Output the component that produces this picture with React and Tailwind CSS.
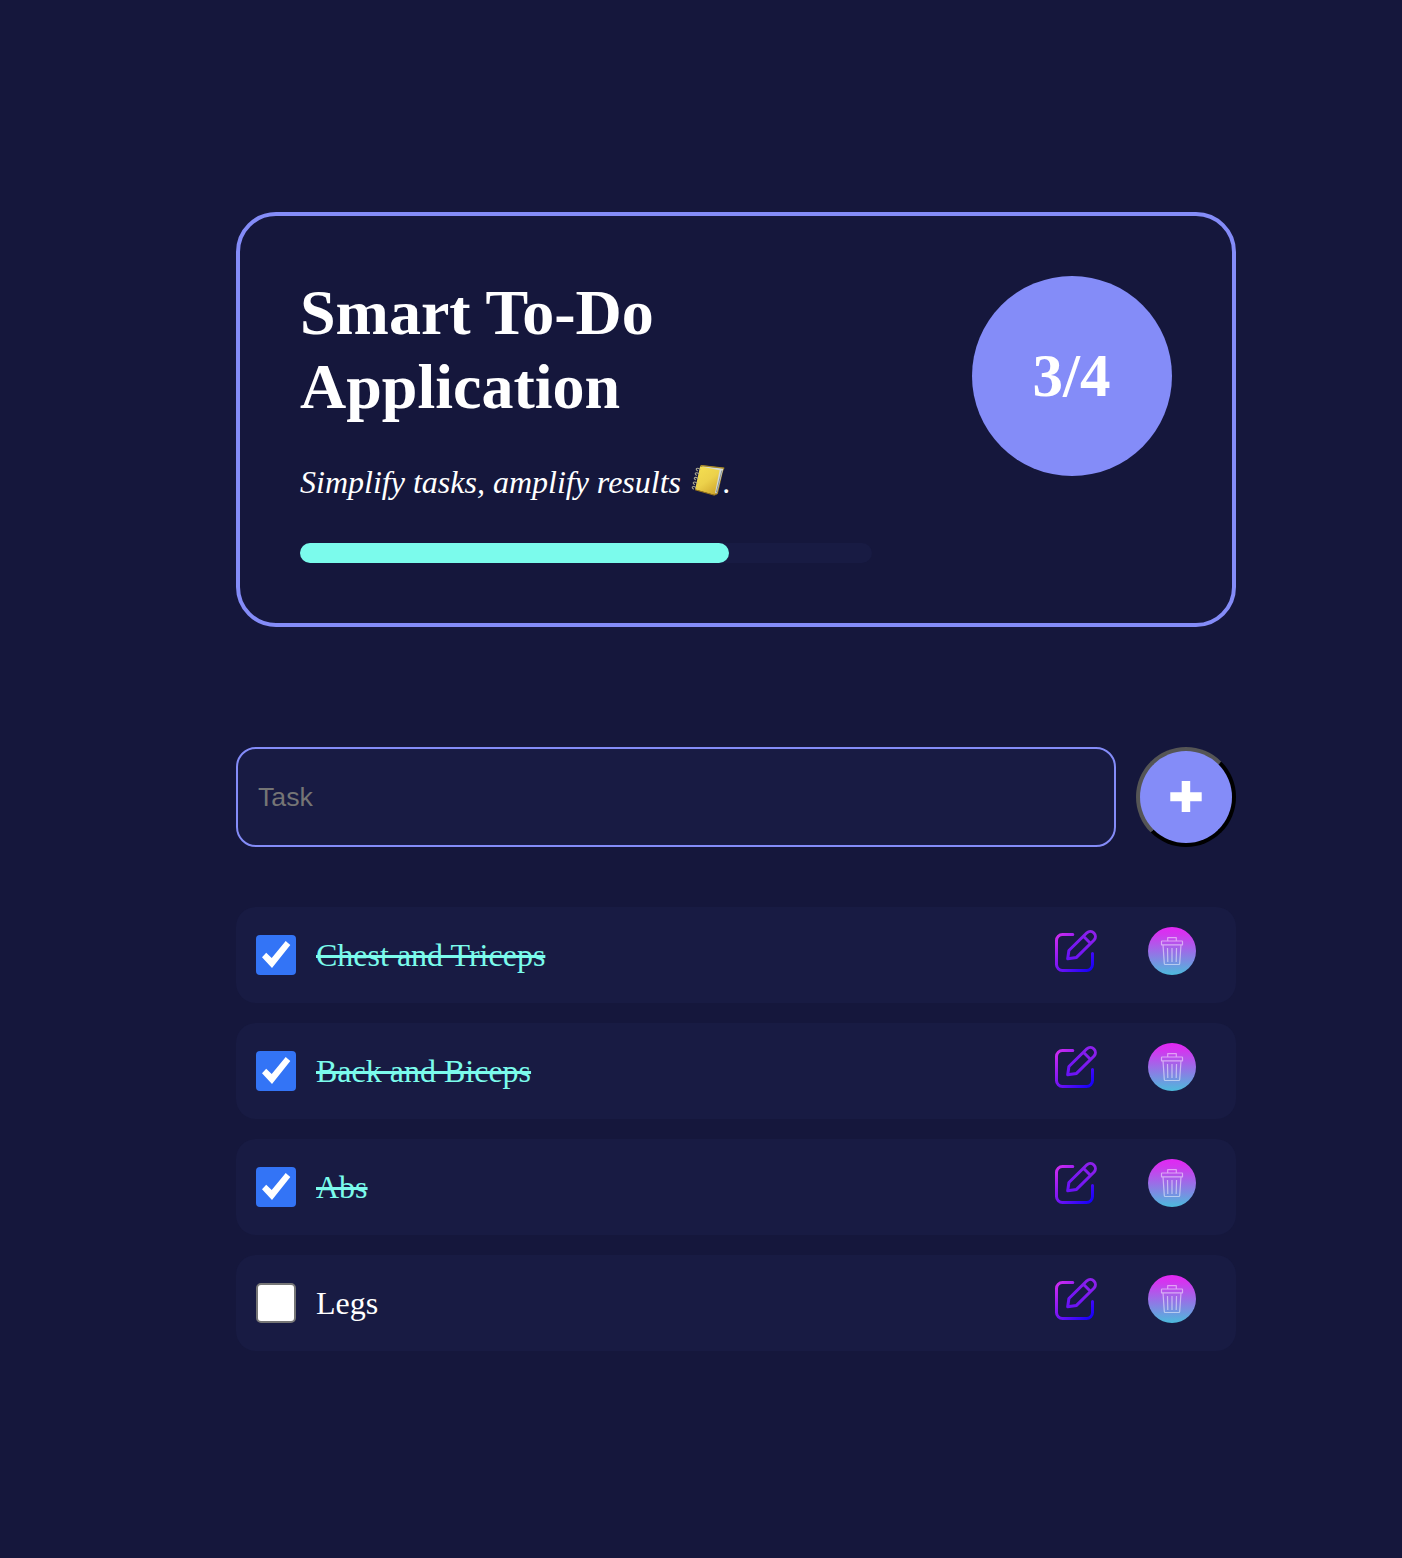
import React from "react";

const tasks = [
  { title: "Chest and Triceps", done: true },
  { title: "Back and Biceps", done: true },
  { title: "Abs", done: true },
  { title: "Legs", done: false },
];

function NotebookIcon() {
  return (
    <svg className="-mt-[10px] mr-[-4px] ml-px inline-block h-[37px] w-[37px] align-middle" viewBox="-1.300 -1 37 37" fill="none">
      <defs>
        <linearGradient id="cover" x1="0.2" y1="0" x2="0.8" y2="1">
          <stop offset="0" stopColor="#f4de50" />
          <stop offset="0.5" stopColor="#ecd14b" />
          <stop offset="1" stopColor="#cfa62c" />
        </linearGradient>
      </defs>
      <path d="M9.500 2 33 5 31.500 9 26.500 31 23 32Z" fill="#a8872a" />
      <path d="M11 3.200 32 5.800 25.500 30.500 23 30Z" fill="#d5dad6" />
      <path d="M30.500 7.500 25 29.500" stroke="#87949b" strokeWidth="1" />
      <path d="M8.800 3.300 28.300 7.300 23.300 32 3.800 26.500Z" fill="url(#cover)" />
      <path d="M9.300 2.500 33 5" stroke="#a98b27" strokeWidth="1" />
      <path d="M3.800 26.800 23 32.200 25.500 31" stroke="#9c7719" strokeWidth="1" />
      <g stroke="#a9a68f" strokeWidth="1.100">
        <path d="M9 6.500C5 3.800 3.600 6.500 6.500 8" />
        <path d="M8 11C4 8.300 2.600 11 5.500 12.500" />
        <path d="M7 15.600C3 12.900 1.600 15.600 4.500 17.100" />
        <path d="M6 20.200C2 17.500 .6 20.200 3.500 21.700" />
        <path d="M5 24.700C1 22 -.4 24.700 2.500 26.200" />
      </g>
    </svg>
  );
}

function EditIcon() {
  return (
    <svg className="block h-12 w-12" viewBox="4 3 48 48" fill="none" strokeWidth="3" strokeLinecap="round" strokeLinejoin="round">
      <defs>
        <linearGradient id="edit" gradientUnits="userSpaceOnUse" x1="8" y1="10" x2="45" y2="46">
          <stop offset="0" stopColor="#d22df0" />
          <stop offset="0.4" stopColor="#8718f3" />
          <stop offset="1" stopColor="#1100fa" />
        </linearGradient>
        <linearGradient id="pencil" gradientUnits="userSpaceOnUse" x1="42" y1="6" x2="22" y2="35">
          <stop offset="0" stopColor="#8e20ec" />
          <stop offset="1" stopColor="#6a12f7" />
        </linearGradient>
      </defs>
      <path d="M24.800 10.500H14.500a6 6 0 0 0-6 6V40.500a6 6 0 0 0 6 6H38.500a6 6 0 0 0 6-6V29.500" stroke="url(#edit)" />
      <path d="M19.700 34.700 20.900 26.500 38.900 8.800a5.100 5.100 0 0 1 7.200 7.200L28.500 33.400ZM35.400 12.300l7.200 7.200" stroke="url(#pencil)" />
    </svg>
  );
}

function TrashIcon() {
  return (
    <svg className="block h-12 w-12" viewBox="4 5 48 48" fill="none">
      <defs>
        <linearGradient id="trash" x1="0" y1="0" x2="0" y2="1">
          <stop offset="0" stopColor="#e327f4" />
          <stop offset="0.15" stopColor="#d336ef" />
          <stop offset="1" stopColor="#4cbbdc" />
        </linearGradient>
      </defs>
      <circle cx="28" cy="29" r="24" fill="url(#trash)" />
      <g stroke="#fff" strokeOpacity=".5" strokeWidth="1.200" strokeLinejoin="round">
        <path d="M23.700 19V15.700h8.600V19M17.500 19.500q0-.5.5-.5h20q.5 0 .5.500V22.800h-21ZM19 22.800l1.300 18.700q0 1 1 1h13.400q1 0 1-1L37 22.800" />
        <path d="M23.500 26l.3 14M28 26v14M32.500 26l-.3 14" />
      </g>
    </svg>
  );
}

function TaskRow({ title, done }) {
  return (
    <li className="flex h-24 items-center rounded-[20px] bg-[#181b43] px-5">
      <span
        role="checkbox"
        aria-checked={done}
        aria-label={title}
        className={
          done
            ? "h-10 w-10 rounded-[4px] bg-[#3374f6]"
            : "h-10 w-10 rounded-[5px] border-2 border-[#767676] bg-white"
        }
      >
        {done && (
          <svg className="block h-10 w-10" viewBox="0 0 40 40" fill="#fff">
            <path d="M6 22.300 10.200 17.700 15.700 23 29.700 6 34.300 10 16 33Z" />
          </svg>
        )}
      </span>
      <span
        className={
          done
            ? "ml-5 text-[32px] leading-[37px] text-[#7bfbec] line-through decoration-[3px]"
            : "ml-5 text-[32px] leading-[37px] text-white"
        }
      >
        {title}
      </span>
      <div className="mr-5 mb-2 ml-auto flex gap-12">
        <button aria-label="Edit"><EditIcon /></button>
        <button aria-label="Delete"><TrashIcon /></button>
      </div>
    </li>
  );
}

export default function App() {
  const completed = tasks.filter((task) => task.done).length;
  return (
    <main className="min-h-[1558px] bg-[#15173c] pt-[212px] pl-[236px] font-['Liberation_Serif',serif] text-white">
      <div className="w-[1000px]">
        <header className="flex h-[415px] items-start gap-[100px] rounded-[40px] border-4 border-[#848cf8] p-[60px]">
          <div className="w-[572px]">
            <h1 className="w-[400px] text-[64px] leading-[74px] font-bold">Smart To-Do Application</h1>
            <p className="mt-10 h-[37px] text-[32px] leading-[37px] whitespace-nowrap italic">
              Simplify tasks, amplify results <NotebookIcon />.
            </p>
            <div className="mt-[42px] h-5 rounded-[10px] bg-[#181b43]">
              <div
                className="h-5 rounded-[10px] bg-[#7bfbec]"
                style={{ width: `${(completed / tasks.length) * 100}%` }}
              />
            </div>
          </div>
          <div className="flex h-[200px] w-[200px] items-center justify-center rounded-full bg-[#848cf8] pr-px text-[61px] font-bold">
            {completed}/{tasks.length}
          </div>
        </header>

        <form className="mt-[120px] flex gap-5">
          <input
            placeholder="Task"
            className="h-[100px] w-[880px] rounded-[20px] border-2 border-[#848cf8] bg-[#181b43] px-5 font-['Liberation_Sans',sans-serif] text-[26.667px] placeholder:text-[#757575]"
          />
          <button
            type="button"
            aria-label="Add task"
            className="flex h-[100px] w-[100px] items-center justify-center rounded-full border-4 border-t-[#555555] border-r-black border-b-black border-l-[#555555] bg-[#848cf8]"
          >
            <svg className="h-8 w-8" viewBox="0 0 32 32" fill="#fff">
              <path d="M11.700 0h8.500v11.200h11.500v9H20.200V31h-8.500V20.200H.3v-9H11.700Z" />
            </svg>
          </button>
        </form>

        <ul className="mt-[60px] flex flex-col gap-5">
          {tasks.map((task) => (
            <TaskRow key={task.title} {...task} />
          ))}
        </ul>
      </div>
    </main>
  );
}
